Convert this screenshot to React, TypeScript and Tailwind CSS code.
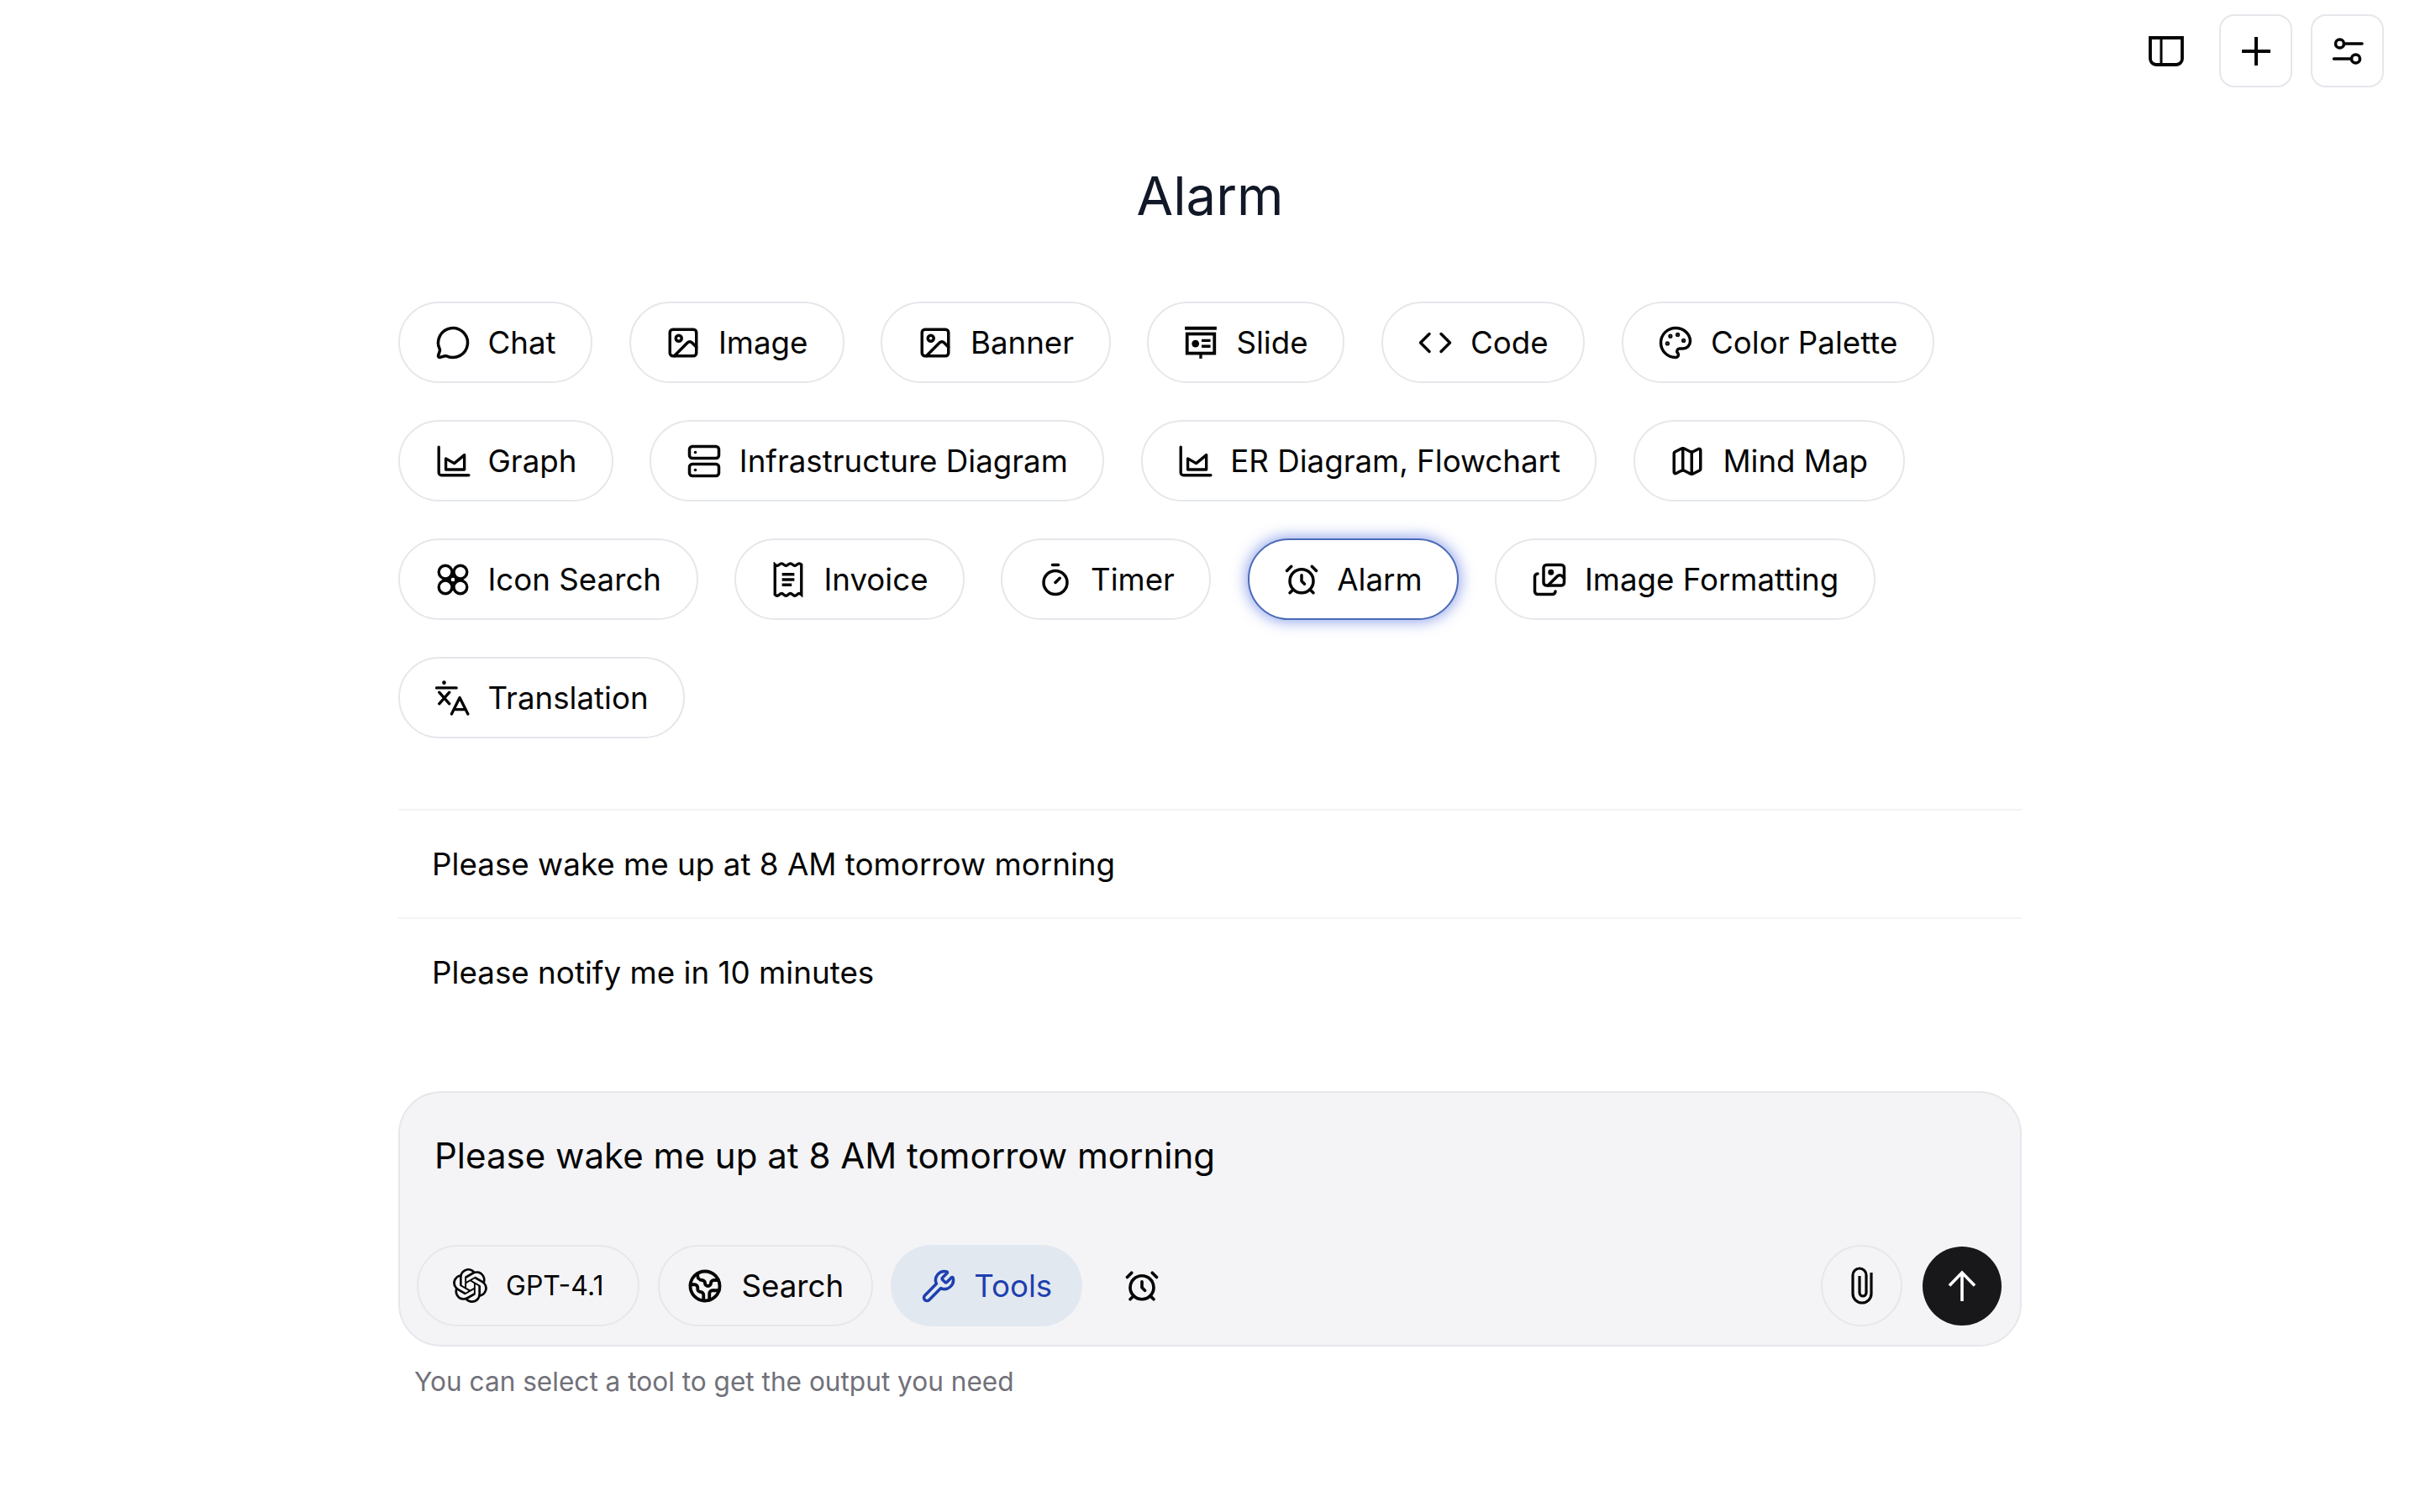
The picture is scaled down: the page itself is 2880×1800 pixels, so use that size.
import React from "react";
import {
  MessageCircle, Image as ImageIcon, Code, Palette, Server, Map as MapIcon, Timer, AlarmClock, Images, Earth, Wrench,
} from "lucide-react";
import { SiOpenai } from "react-icons/si";

const sv = { fill: "none", stroke: "currentColor", strokeWidth: 3.2, strokeLinecap: "round" as const, strokeLinejoin: "round" as const };

function SlideIcon() {
  return (
    <svg width="42" height="42" viewBox="0 0 40 40" {...sv} strokeLinecap="butt" strokeLinejoin="miter">
      <path d="M2 3.500H38" strokeWidth="3.8" />
      <rect x="4.500" y="10" width="31" height="22" strokeWidth="3.6" />
      <circle cx="14" cy="21" r="4.200" fill="currentColor" stroke="none" />
      <path d="M21 17.500H31M21 24H31" />
      <path d="M20 32V38" />
    </svg>
  );
}
function GraphIcon() {
  return (
    <svg width="42" height="42" viewBox="0 0 40 40" {...sv}>
      <path d="M4 4V33a3 3 0 0 0 3 3H38" />
      <path d="M12 29.500V17L21.500 22.500L33 13V29.500Z" />
    </svg>
  );
}
function FlowerIcon() {
  return (
    <svg width="42" height="42" viewBox="0 0 40 40" {...sv}>
      <circle cx="11.500" cy="11.500" r="7.500" />
      <circle cx="28.500" cy="11.500" r="7.500" />
      <circle cx="11.500" cy="28.500" r="7.500" />
      <circle cx="28.500" cy="28.500" r="7.500" />
      <path d="M17 17L23 23M23 17L17 23" />
      <circle cx="20" cy="20" r="3.800" fill="#fff" />
    </svg>
  );
}
function InvoiceIcon() {
  return (
    <svg width="42" height="42" viewBox="0 0 40 40" {...sv} strokeLinejoin="miter">
      <path d="M5 3q2.500 2.500 5 0t5 0 5 0 5 0 5 0 5 0V37q-2.500-2.500-5 0t-5 0-5 0-5 0-5 0-5 0Z" />
      <path d="M13 14H27M13 20H27M13 26H24" strokeLinecap="butt" />
    </svg>
  );
}
function TranslateIcon() {
  return (
    <svg width="42" height="42" viewBox="0 0 40 40" {...sv}>
      <circle cx="10" cy="2.500" r="2.200" fill="currentColor" stroke="none" />
      <path d="M1.500 8.500H24M4.500 13.500L16 26.500M16 13.500L4.500 26.500" />
      <path d="M18.500 38L27.700 19.500L37 38M21 33H34.500" />
    </svg>
  );
}
function SidebarIcon() {
  return (
    <svg width="42" height="36" viewBox="0 0 42 36" fill="none" stroke="currentColor">
      <path d="M2 2H40V27a7 7 0 0 1-7 7H9a7 7 0 0 1-7-7Z" strokeWidth="3.800" />
      <path d="M15 2V34" strokeWidth="3" />
    </svg>
  );
}
function PlusIcon() {
  return (
    <svg width="40" height="40" viewBox="0 0 40 40" fill="none" stroke="currentColor" strokeWidth="4">
      <path d="M3 20H37M20 3V37" />
    </svg>
  );
}
function TuneIcon() {
  return (
    <svg width="40" height="40" viewBox="0 0 40 40" {...sv} strokeWidth="3.600">
      <circle cx="10.500" cy="11" r="5" />
      <path d="M15.500 11H37M3.500 29H24" />
      <circle cx="29.500" cy="29" r="5" />
    </svg>
  );
}
function ClipIcon() {
  return (
    <svg width="26" height="45" viewBox="0 0 26 45" fill="none" stroke="currentColor" strokeWidth="3.200">
      <path d="M24 7V32A11 11 0 0 1 2 32V10A8 8 0 0 1 18 10V31A4 4 0 0 1 10 31V11" />
    </svg>
  );
}
function ArrowIcon() {
  return (
    <svg width="34" height="38" viewBox="0 0 34 38" fill="none" stroke="currentColor" strokeWidth="3.600">
      <path d="M17 37V3M2 18.500L17 3L32 18.500" />
    </svg>
  );
}

const L = { size: 42, strokeWidth: 2 };
const rows: { label: string; icon: React.ReactNode; active?: boolean }[] = [
  { label: "Chat", icon: <MessageCircle {...L} /> },
  { label: "Image", icon: <ImageIcon {...L} /> },
  { label: "Banner", icon: <ImageIcon {...L} /> },
  { label: "Slide", icon: <SlideIcon /> },
  { label: "Code", icon: <Code {...L} /> },
  { label: "Color Palette", icon: <Palette {...L} /> },
  { label: "Graph", icon: <GraphIcon /> },
  { label: "Infrastructure Diagram", icon: <Server {...L} /> },
  { label: "ER Diagram, Flowchart", icon: <GraphIcon /> },
  { label: "Mind Map", icon: <MapIcon {...L} /> },
  { label: "Icon Search", icon: <FlowerIcon /> },
  { label: "Invoice", icon: <InvoiceIcon /> },
  { label: "Timer", icon: <Timer {...L} /> },
  { label: "Alarm", icon: <AlarmClock {...L} />, active: true },
  { label: "Image Formatting", icon: <Images {...L} /> },
  { label: "Translation", icon: <TranslateIcon /> },
];

export default function App() {
  return (
    <div className="min-h-screen bg-white text-[#050505] font-['Inter',sans-serif]">
      <header className="flex h-[198px] items-start justify-end gap-[22px] pr-[43px] pt-[17px]">
        <button className="flex h-[87px] w-[87px] items-center justify-center pl-[4px]">
          <SidebarIcon />
        </button>
        <button className="flex h-[87px] w-[87px] items-center justify-center rounded-[18px] border-2 border-[#e5e7eb]">
          <PlusIcon />
        </button>
        <button className="flex h-[87px] w-[87px] items-center justify-center rounded-[18px] border-2 border-[#e5e7eb]">
          <TuneIcon />
        </button>
      </header>

      <main className="mx-auto w-[1932px]">
        <h1 className="h-[70px] text-center text-[63.300px] font-normal leading-[70px] text-[#111827]">Alarm</h1>

        <div className="mt-[91px] flex flex-wrap gap-x-[43.400px] gap-y-[44px]">
          {rows.map((r) => (
            <button
              key={r.label}
              className={
                r.active
                  ? "flex h-[97px] items-center gap-[21px] rounded-full border-2 border-[#4a6bb8] bg-white px-[41.500px] text-[36.700px] shadow-[0_0_16px_3px_rgba(59,91,219,0.5)]"
                  : "flex h-[97px] items-center gap-[21px] rounded-full border-2 border-[#e5e7eb] bg-white px-[41.500px] text-[36.700px]"
              }
            >
              <span className="flex h-[42px] w-[42px] shrink-0 items-center justify-center">{r.icon}</span>
              <span className="whitespace-nowrap">{r.label}</span>
            </button>
          ))}
        </div>

        <ul className="mt-[84px]">
          <li className="flex h-[129px] items-center border-t-2 border-[#f3f4f6] pl-[40px] text-[36.800px]">Please wake me up at 8 AM tomorrow morning</li>
          <li className="flex h-[129px] items-center border-t-2 border-[#f3f4f6] pl-[40px] text-[36.800px]">Please notify me in 10 minutes</li>
        </ul>

        <section className="mt-[78px] flex h-[304px] flex-col justify-between rounded-[51px] border-2 border-[#e5e7eb] bg-[#f4f4f6] pb-[22px] pl-[20px] pr-[22px] pt-[45px]">
          <p className="pl-[21px] text-[42.050px] leading-[60px]">Please wake me up at 8 AM tomorrow morning</p>
          <div className="flex items-center">
            <button className="flex h-[97px] items-center gap-[22px] rounded-full border-2 border-[#e5e7eb] px-[41px] text-[32px]">
              <SiOpenai size={41} />
              <span>GPT-4.1</span>
            </button>
            <button className="ml-[22px] flex h-[97px] items-center gap-[22px] rounded-full border-2 border-[#e5e7eb] px-[33px] text-[36.700px]">
              <Earth size={42} strokeWidth={2.2} />
              <span>Search</span>
            </button>
            <button className="ml-[21px] flex h-[97px] items-center gap-[21px] rounded-full bg-[#e2e8f0] px-[36px] text-[36.700px] text-[#1e40af]">
              <Wrench size={42} strokeWidth={2} />
              <span>Tools</span>
            </button>
            <span className="ml-[50px]">
              <AlarmClock size={42} strokeWidth={2.1} />
            </span>
            <button className="ml-auto flex h-[97px] w-[97px] items-center justify-center rounded-full border-2 border-[#e5e7eb]">
              <ClipIcon />
            </button>
            <button className="ml-[24px] flex h-[94px] w-[94px] items-center justify-center rounded-full bg-[#18181b] text-white">
              <ArrowIcon />
            </button>
          </div>
        </section>

        <p className="mt-[21px] pl-[19px] text-[31.600px] leading-[42px] text-[#71717a]">You can select a tool to get the output you need</p>
      </main>
    </div>
  );
}
